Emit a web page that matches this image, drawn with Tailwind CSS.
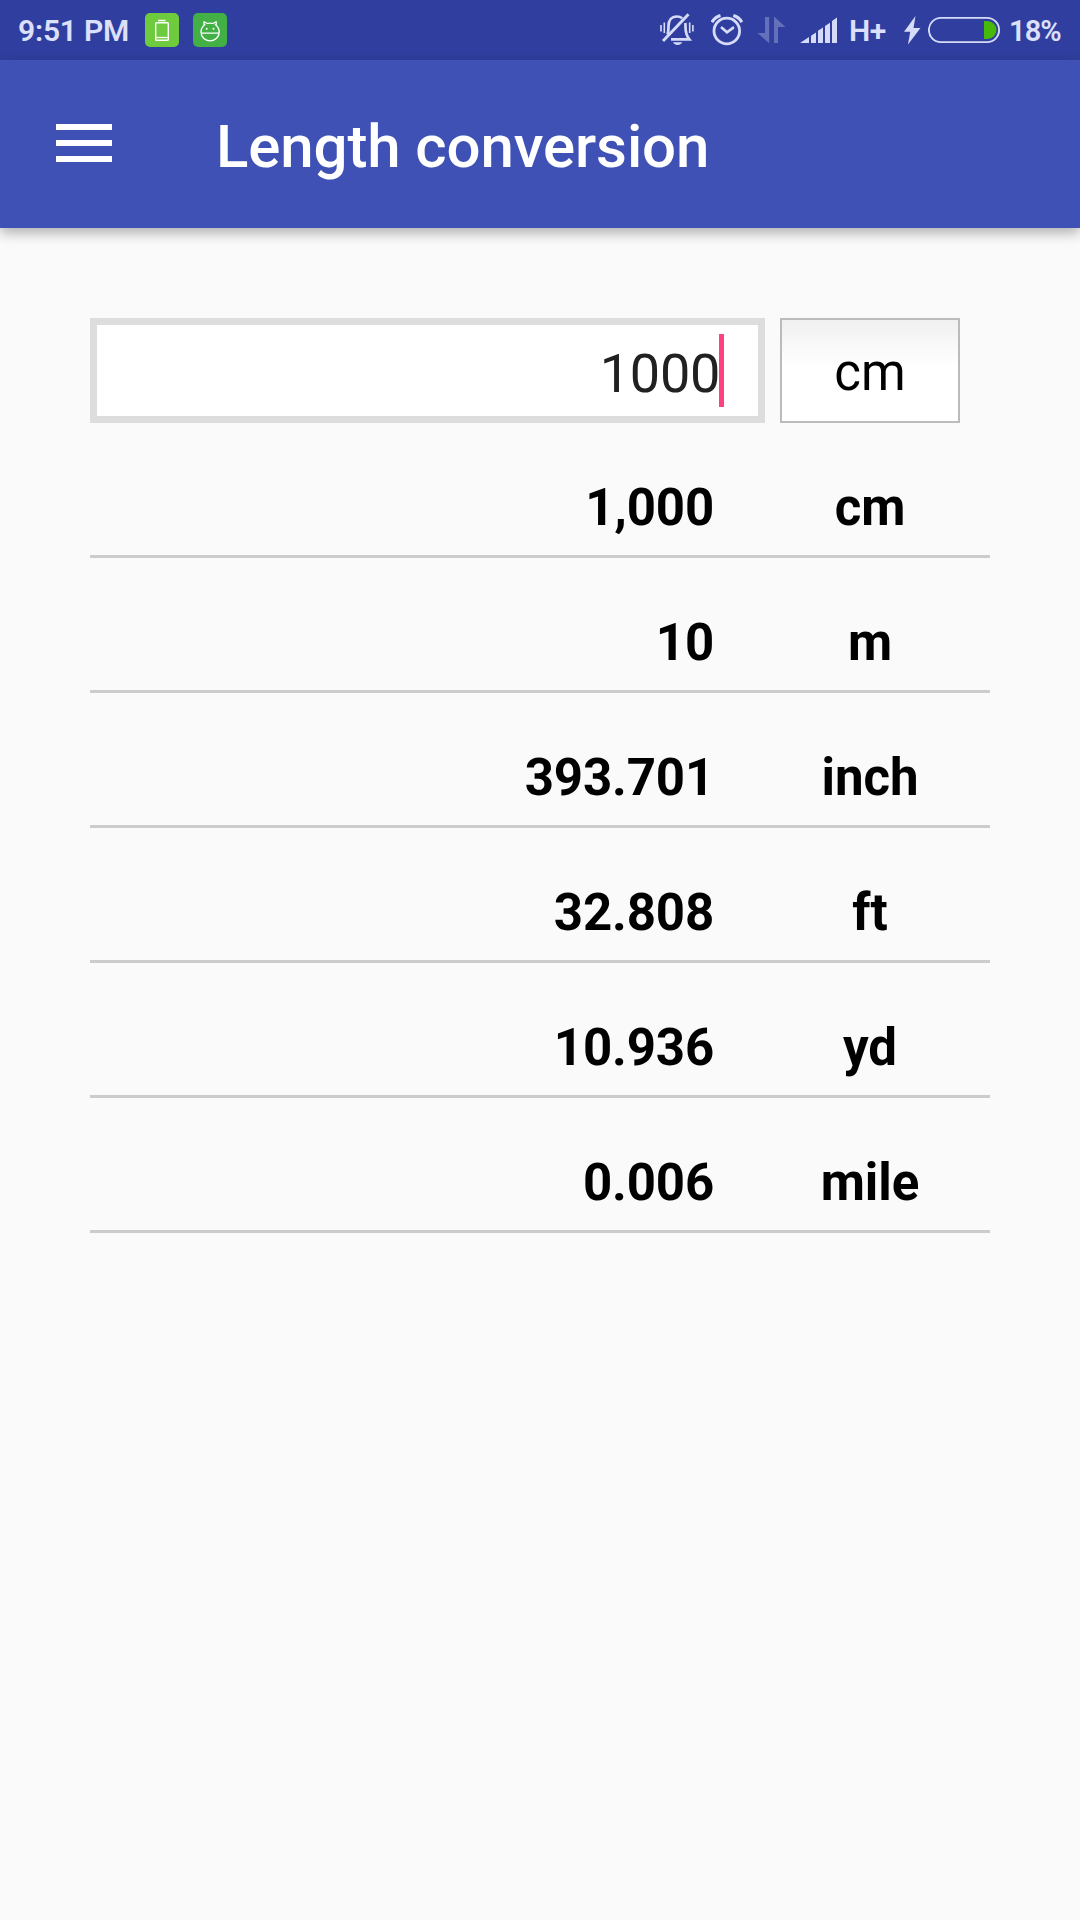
<!DOCTYPE html>
<html lang="en">
<head>
<meta charset="utf-8">
<title>Length conversion</title>
<script src="https://cdn.jsdelivr.net/npm/@tailwindcss/browser@4"></script>
</head>
<body class="w-[1080px] h-[1920px] overflow-hidden bg-[#fafafa] font-['Roboto',sans-serif] text-black">
  <div class="flex h-[60px] items-center bg-[#303f9f] pl-[18px] text-[30px] leading-[60px] font-semibold text-[#dce0fa]">
    <span class="w-[127px] whitespace-nowrap text-[30px] tracking-[-0.2px] pt-px">9:51 PM</span>
    <svg class="h-[34px] w-[34px]" viewBox="145 13 34 34" fill="none">
      <rect x="145" y="13" width="34" height="34" rx="5" fill="#6dcb3d"/>
      <path d="M158 20.5h7.500" stroke="#fff" stroke-width="1.5"/>
      <rect x="155.700" y="22.700" width="12.600" height="17.600" rx="0.800" stroke="#fff" stroke-width="1.4"/>
      <path d="M156 37.500h12" stroke="#fff" stroke-width="1.300"/>
    </svg>
    <svg class="ml-[14px] h-[34px] w-[34px]" viewBox="193 13 34 34" fill="none">
      <rect x="193" y="13" width="34" height="34" rx="5" fill="#43b045"/>
      <path d="M201 33.200h18.200M205.300 24.200C202.700 26 201 29 201 32c0 5 4 8.900 9.100 8.900s9.100-3.900 9.100-8.900c0-3-1.700-6-4.300-7.800M204 26v-4.300l3.300 1.800c1.800-.6 3.800-.6 5.600 0l3.300-1.800V26" stroke="#fff" stroke-width="1.300" stroke-linejoin="round"/>
      <circle cx="206.700" cy="28.700" r="1" fill="#fff"/><circle cx="213.500" cy="28.700" r="1" fill="#fff"/>
    </svg>
    <svg class="ml-[433px] h-[34px] w-[34px]" viewBox="660 13 34 34" fill="none" stroke="#d6dbf8">
      <path d="M661 25v6.500M664.300 22.500v10.500M689.700 22.500v10.500M692.900 25v6.500" stroke-width="1.6"/>
      <path d="M667.500 34.500c1-2.500 1-5 1-8.500 0-5.500 3-9.500 8.500-9.500 2 0 3.800.6 5.200 1.700M685.300 23c.3 1.300.2 2.600.2 4 0 5.500.7 8.500 3.800 12.400H671" stroke-width="2.700"/>
      <path d="M688.500 14.300L663 41" stroke-width="2.900"/>
      <path d="M673 42.200h9.200c-1 1.700-2.500 2.800-4.600 2.800s-3.600-1.100-4.600-2.800z" fill="#d6dbf8" stroke="none"/>
    </svg>
    <svg class="ml-[17px] h-[34px] w-[32px]" viewBox="711 13 32 34" fill="none" stroke="#d6dbf8">
      <circle cx="726.800" cy="31" r="12.800" stroke-width="2.800"/>
      <path d="M721.800 27.800l5.200 4.500 6-4.500" stroke-width="2.700" stroke-linecap="round"/>
      <path d="M712 22.200c1.700-3.200 4.800-5.700 8.500-6.700M741.800 22.200c-1.700-3.200-4.800-5.700-8.500-6.700" stroke-width="3.200"/>
    </svg>
    <svg class="ml-[14px] h-[34px] w-[29px]" viewBox="757 13 29 34" fill="#6470b9">
      <path d="M765 17h4.200v26.300L757.500 33H765zM774 43V16.500L785.500 27H778v16z"/>
    </svg>
    <svg class="ml-[14px] h-[34px] w-[38px]" viewBox="800 13 38 34" fill="#d6dbf8">
      <path d="M800 43l9-6v6zM811 35.700l5-3.300V43h-5zM818 30.700l5-3.300V43h-5zM825 26l5-3.300V43h-5zM832 21l5-3.500V43h-5z"/>
    </svg>
    <span class="ml-[11px] w-[55px] pt-px text-[30px] tracking-[-0.500px]">H+</span>
    <svg class="h-[34px] w-[17px]" viewBox="904 13 17 34" fill="#d6dbf8"><path d="M915.500 16L904 31.800h6.200L908 44.500 920.500 28h-7z"/></svg>
    <svg class="ml-[7px] h-[34px] w-[73px]" viewBox="928 13 73 34" fill="none">
      <rect x="928.900" y="17.900" width="70.200" height="24.200" rx="12.100" stroke="#d6dbf8" stroke-width="1.900"/>
      <path d="M984 21h3.500a9 9 0 0 1 0 18H984z" fill="#46b90a"/>
    </svg>
    <span class="ml-[8px] whitespace-nowrap text-[29px] tracking-[-0.900px] pt-px">18%</span>
  </div>
  <header class="flex h-[168px] items-center bg-[#3f51b5] pl-[56px] text-white shadow-[0_5px_12px_rgba(0,0,0,0.3)]">
    <svg class="h-[38px] w-[56px] mb-[2px]" viewBox="0 0 56 38" fill="#fff"><path d="M0 0h56v6H0zM0 16h56v6H0zM0 32h56v6H0z"/></svg>
    <h1 class="ml-[104px] pt-[5px] text-[60px] leading-[70px] font-medium tracking-[-0.120px] whitespace-nowrap">Length conversion</h1>
  </header>
  <main class="px-[90px] pt-[90px]">
    <div class="flex h-[105px] gap-[15px]">
      <div class="flex w-[675px] items-center justify-end border-[7px] border-[#ddd] bg-white pr-[34px]">
        <span class="text-[54px] leading-[64px] tracking-[-0.300px] text-[#212121] pt-[6px]">1000</span>
        <span class="h-[73px] w-[5px] -ml-px bg-[#ff4081]"></span>
      </div>
      <div class="flex w-[180px] items-center justify-center border-2 border-[#bbb] bg-linear-to-b from-[#f0f0f0] to-white to-45% text-[51px] leading-[60px] pt-[5px]">cm</div>
    </div>
    <div class="text-[51px] leading-[60px] font-bold">
      <div class="flex h-[135px] items-end border-b-3 border-[#ccc] pb-[17px]"><span class="w-[624px] text-right tracking-[-0.150px]">1,000</span><span class="ml-[66px] w-[180px] text-center">cm</span></div>
      <div class="flex h-[135px] items-end border-b-3 border-[#ccc] pb-[17px]"><span class="w-[624px] text-right tracking-[-0.150px]">10</span><span class="ml-[66px] w-[180px] text-center">m</span></div>
      <div class="flex h-[135px] items-end border-b-3 border-[#ccc] pb-[17px]"><span class="w-[624px] text-right tracking-[-0.150px]">393.701</span><span class="ml-[66px] w-[180px] text-center">inch</span></div>
      <div class="flex h-[135px] items-end border-b-3 border-[#ccc] pb-[17px]"><span class="w-[624px] text-right tracking-[-0.150px]">32.808</span><span class="ml-[66px] w-[180px] text-center">ft</span></div>
      <div class="flex h-[135px] items-end border-b-3 border-[#ccc] pb-[17px]"><span class="w-[624px] text-right tracking-[-0.150px]">10.936</span><span class="ml-[66px] w-[180px] text-center">yd</span></div>
      <div class="flex h-[135px] items-end border-b-3 border-[#ccc] pb-[17px]"><span class="w-[624px] text-right tracking-[-0.150px]">0.006</span><span class="ml-[66px] w-[180px] text-center">mile</span></div>
    </div>
  </main>
</body>
</html>
